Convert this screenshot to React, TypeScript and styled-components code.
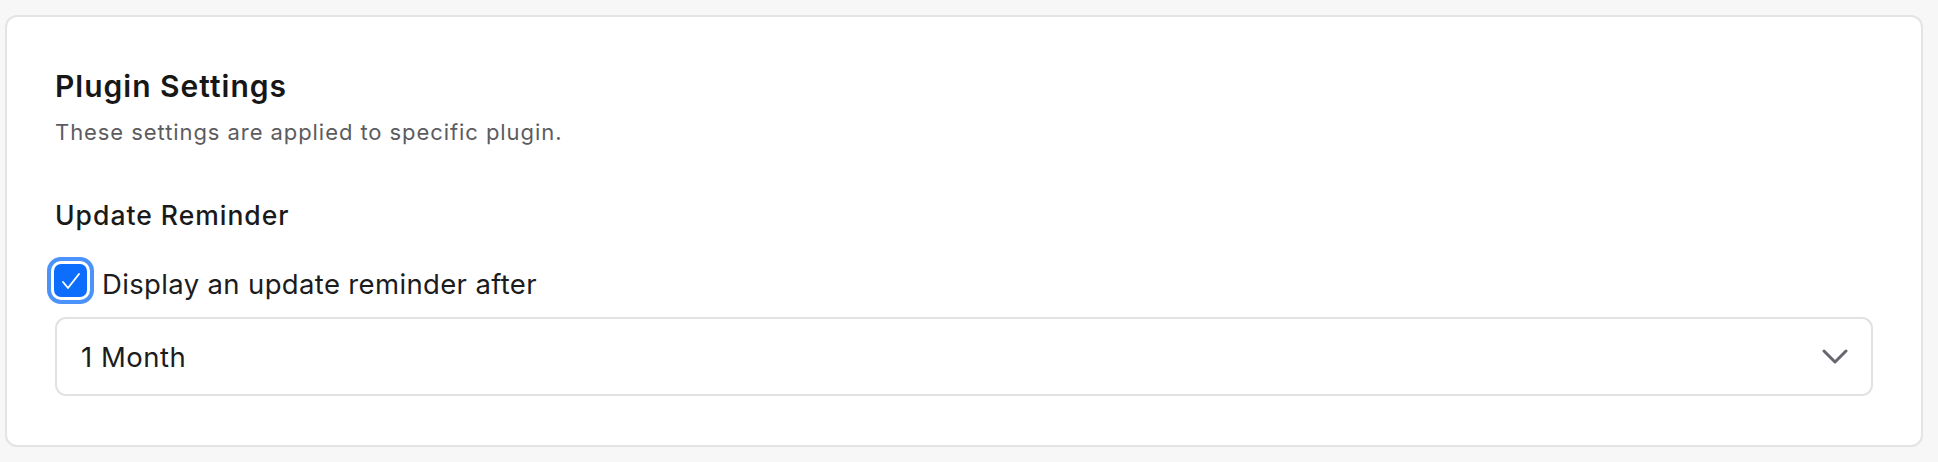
import React from "react";
import styled, { createGlobalStyle } from "styled-components";

const GlobalStyle = createGlobalStyle`
  html, body {
    margin: 0;
    padding: 0;
    background: #f7f7f7;
  }
  body {
    font-family: Inter, "Noto Sans", "Liberation Sans", sans-serif;
    -webkit-font-smoothing: antialiased;
  }
`;

const Page = styled.div`
  padding: 15px 15px 17px 5px;
  background: #f7f7f7;
`;

const Card = styled.section`
  background: #ffffff;
  border: 2px solid #e4e4e4;
  border-radius: 12px;
  padding: 51px 48px 49px 48px;
  display: flex;
  flex-direction: column;
`;

const Title = styled.h2`
  margin: 0;
  font-size: 30px;
  line-height: 36px;
  font-weight: 600;
  letter-spacing: 1px;
  color: #171717;
`;

const Description = styled.p`
  margin: 14px 0 0 0;
  font-size: 22px;
  line-height: 28px;
  font-weight: 400;
  letter-spacing: 0.93px;
  color: #5c5c5f;
`;

const SectionHeading = styled.h3`
  margin: 53px 0 0 0;
  font-size: 26.5px;
  line-height: 32px;
  font-weight: 500;
  letter-spacing: 1px;
  color: #1a1a1a;
`;

const CheckRow = styled.label`
  margin-top: 28px;
  display: flex;
  align-items: center;
  gap: 15px;
  cursor: pointer;
`;

const Box = styled.span<{ $checked: boolean }>`
  flex: none;
  margin-left: -1px;
  width: 33px;
  height: 33px;
  box-sizing: border-box;
  border-radius: 7px;
  background: ${(p) => (p.$checked ? "#0d6efd" : "#ffffff")};
  outline: 4px solid #4b93fb;
  outline-offset: 3px;
  display: flex;
  align-items: center;
  justify-content: center;
`;

const LabelText = styled.span`
  padding-top: 7px;
  font-size: 27.5px;
  line-height: 36px;
  letter-spacing: 0.35px;
  color: #1c1c1c;
`;

const SelectBox = styled.div`
  margin-top: 15px;
  height: 79px;
  box-sizing: border-box;
  border: 2px solid #e2e2e2;
  border-radius: 11px;
  padding: 0 23px 0 24px;
  display: flex;
  align-items: center;
  justify-content: space-between;
`;

const SelectValue = styled.span`
  font-size: 27.5px;
  line-height: 36px;
  letter-spacing: 0.5px;
  color: #1c1c1c;
`;

const Chevron = () => (
  <svg width="26" height="16" viewBox="0 0 26 16" fill="none">
    <polyline
      points="2,2 13,13 24,2"
      stroke="#66666e"
      strokeWidth="3"
      strokeLinecap="round"
      strokeLinejoin="round"
    />
  </svg>
);

const CheckMark = () => (
  <svg width="20" height="18" viewBox="0 0 20 18" fill="none">
    <polyline
      points="2,10 7,16 18,2"
      stroke="#ffffff"
      strokeWidth="1.9"
      strokeLinecap="round"
      strokeLinejoin="round"
    />
  </svg>
);

export default function App() {
  return (
    <>
      <GlobalStyle />
      <Page>
        <Card>
          <Title>Plugin Settings</Title>
          <Description>These settings are applied to specific plugin.</Description>
          <SectionHeading>Update Reminder</SectionHeading>
          <CheckRow>
            <Box $checked>
              <CheckMark />
            </Box>
            <LabelText>Display an update reminder after</LabelText>
          </CheckRow>
          <SelectBox>
            <SelectValue>1 Month</SelectValue>
            <Chevron />
          </SelectBox>
        </Card>
      </Page>
    </>
  );
}
